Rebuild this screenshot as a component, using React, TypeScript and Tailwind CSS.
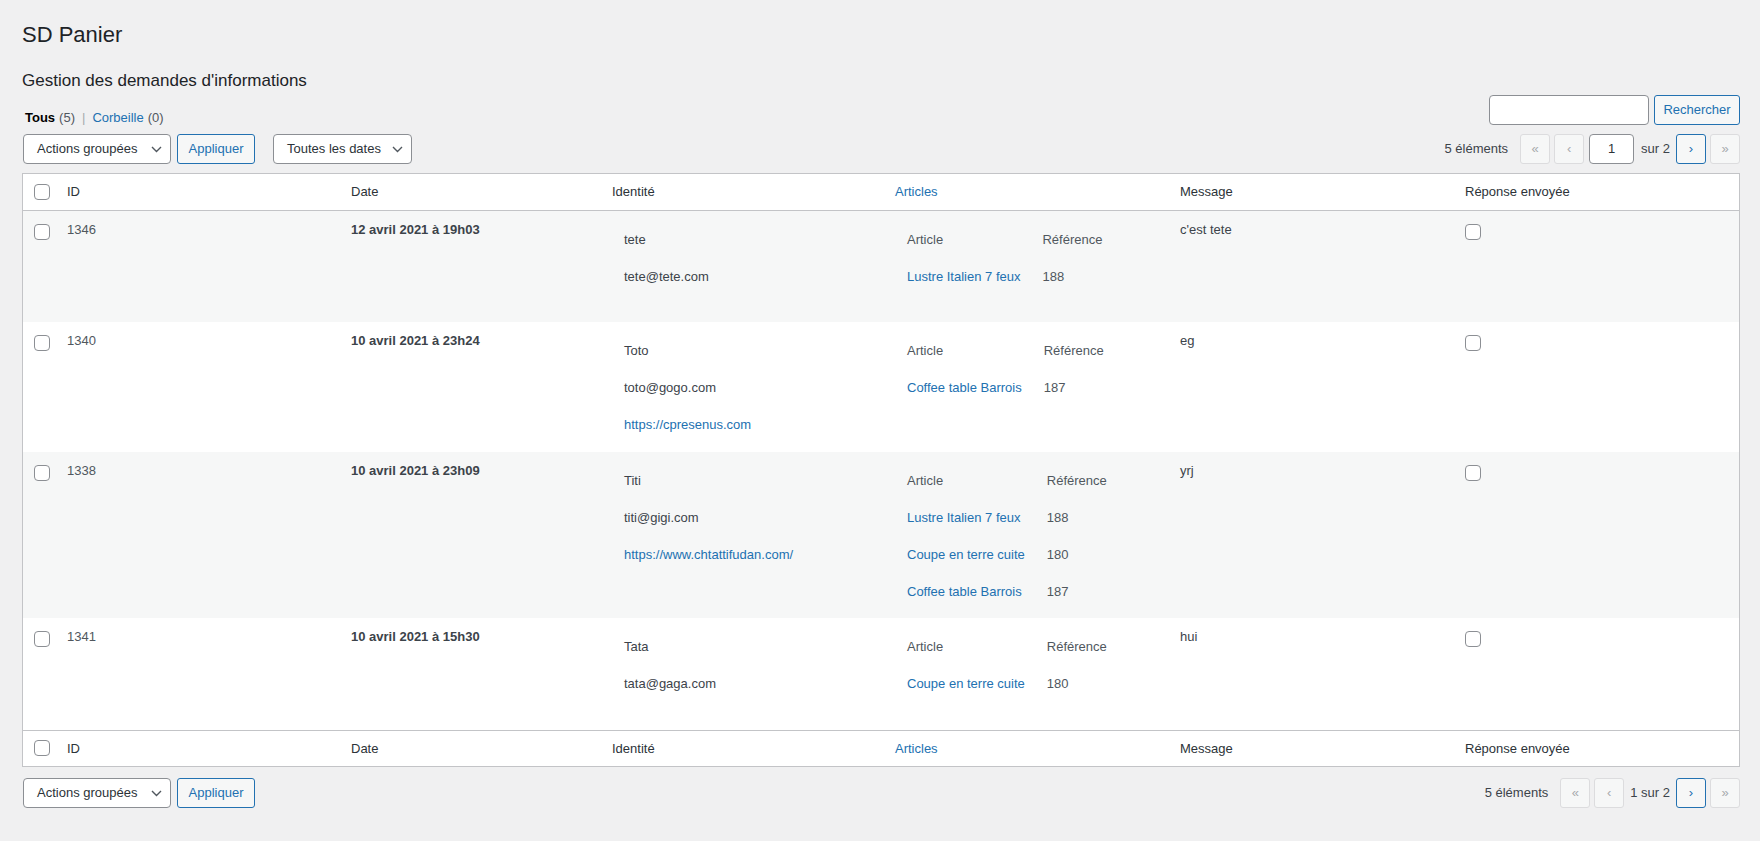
import React from "react";

type Row = {
  id: string;
  date: string;
  name: string;
  email: string;
  url: string;
  articles: [string, string][];
  msg: string;
  h: string;
  striped: boolean;
};

const rows: Row[] = [
  {
    id: "1346",
    date: "12 avril 2021 à 19h03",
    name: "tete",
    email: "tete@tete.com",
    url: "",
    articles: [["Lustre Italien 7 feux", "188"]],
    msg: "c'est tete",
    h: "h-[112px]",
    striped: true,
  },
  {
    id: "1340",
    date: "10 avril 2021 à 23h24",
    name: "Toto",
    email: "toto@gogo.com",
    url: "https://cpresenus.com",
    articles: [["Coffee table Barrois", "187"]],
    msg: "eg",
    h: "h-[130px]",
    striped: false,
  },
  {
    id: "1338",
    date: "10 avril 2021 à 23h09",
    name: "Titi",
    email: "titi@gigi.com",
    url: "https://www.chtattifudan.com/",
    articles: [
      ["Lustre Italien 7 feux", "188"],
      ["Coupe en terre cuite", "180"],
      ["Coffee table Barrois", "187"],
    ],
    msg: "yrj",
    h: "h-[166px]",
    striped: true,
  },
  {
    id: "1341",
    date: "10 avril 2021 à 15h30",
    name: "Tata",
    email: "tata@gaga.com",
    url: "",
    articles: [["Coupe en terre cuite", "180"]],
    msg: "hui",
    h: "h-[112px]",
    striped: false,
  },
];

function Checkbox() {
  return <span className="block w-4 h-4 rounded-[4px] border border-[#8c8f94] bg-white" />;
}

function Chevron() {
  return (
    <svg width="11" height="7" viewBox="0 0 11 7" className="shrink-0">
      <path d="M1 1l4.5 4.5L10 1" fill="none" stroke="#50575e" strokeWidth="1.4" />
    </svg>
  );
}

function Select({ label, w }: { label: string; w: string }) {
  return (
    <div
      className={`${w} h-[30px] flex items-center justify-between pl-[13px] pr-[8px] border border-[#8c8f94] rounded-[4px] bg-white text-[13px] text-[#2c3338]`}
    >
      <span>{label}</span>
      <Chevron />
    </div>
  );
}

function Apply() {
  return (
    <div className="w-[78px] h-[30px] flex items-center justify-center border border-[#2271b1] rounded-[3px] bg-[#f6f7f7] text-[13px] text-[#2271b1]">
      Appliquer
    </div>
  );
}

function PageBtn({ glyph, active }: { glyph: string; active?: boolean }) {
  return active ? (
    <div className="w-[30px] h-[30px] flex items-center justify-center border border-[#2271b1] rounded-[3px] bg-[#f6f7f7] text-[13px] text-[#2271b1]">
      {glyph}
    </div>
  ) : (
    <div className="w-[30px] h-[30px] flex items-center justify-center border border-[#dcdcde] rounded-[3px] bg-[#f6f7f7] text-[13px] text-[#a7aaad]">
      {glyph}
    </div>
  );
}

function HeaderCells() {
  return (
    <>
      <th className="p-0 pl-[11px] align-middle">
        <Checkbox />
      </th>
      <th className="px-[10px] text-left font-normal text-[#2c3338]">ID</th>
      <th className="px-[10px] text-left font-normal text-[#2c3338]">Date</th>
      <th className="px-[10px] text-left font-normal text-[#2c3338]">Identité</th>
      <th className="px-[10px] text-left font-normal text-[#2271b1]">Articles</th>
      <th className="px-[10px] text-left font-normal text-[#2c3338]">Message</th>
      <th className="px-[10px] text-left font-normal text-[#2c3338]">Réponse envoyée</th>
    </>
  );
}

export default function App() {
  return (
    <div className="min-h-screen bg-[#f0f0f1] font-['Liberation_Sans',Arial,sans-serif] text-[13px] leading-[19.5px] text-[#3c434a]">
      <div className="pl-[22px] pr-[20px] pt-[20px] pb-[30px]">
        <h1 className="text-[22px] leading-[30px] font-normal text-[#1d2327]">SD Panier</h1>
        <h2 className="mt-[20px] text-[17px] leading-[22px] font-normal text-[#1d2327]">
          Gestion des demandes d'informations
        </h2>

        <div className="mt-[3px] h-[30px] flex items-start justify-between">
          <div className="mt-[13px] ml-[3px] flex items-center text-[13px]">
            <span className="font-bold text-black">Tous</span>
            <span className="ml-[4px] text-[#50575e]">(5)</span>
            <span className="mx-[7px] text-[#a7aaad]">|</span>
            <span className="text-[#2271b1]">Corbeille</span>
            <span className="ml-[4px] text-[#50575e]">(0)</span>
          </div>
          <div className="flex items-center gap-[5px]">
            <div className="w-[160px] h-[30px] border border-[#8c8f94] rounded-[4px] bg-white" />
            <div className="w-[86px] h-[30px] flex items-center justify-center border border-[#2271b1] rounded-[3px] bg-[#f6f7f7] text-[13px] text-[#2271b1]">
              Rechercher
            </div>
          </div>
        </div>

        <div className="mt-[9px] h-[30px] flex items-center justify-between">
          <div className="ml-[1px] flex items-center">
            <Select label="Actions groupées" w="w-[148px]" />
            <div className="ml-[6px]">
              <Apply />
            </div>
            <div className="ml-[18px]">
              <Select label="Toutes les dates" w="w-[139px]" />
            </div>
          </div>
          <div className="flex items-center">
            <span className="mr-[12px] text-[#3c434a]">5 éléments</span>
            <PageBtn glyph="«" />
            <div className="ml-[4px]">
              <PageBtn glyph="‹" />
            </div>
            <div className="ml-[5px] w-[45px] h-[30px] flex items-center justify-center border border-[#8c8f94] rounded-[4px] bg-white text-[#2c3338]">
              1
            </div>
            <span className="ml-[7px] text-[#3c434a]">sur 2</span>
            <div className="ml-[6px]">
              <PageBtn glyph="›" active />
            </div>
            <div className="ml-[4px]">
              <PageBtn glyph="»" />
            </div>
          </div>
        </div>

        <div className="mt-[9px] border border-[#c3c4c7] bg-white">
          <table className="w-full table-fixed border-collapse">
            <colgroup>
              <col className="w-[34px]" />
              <col className="w-[284px]" />
              <col className="w-[261px]" />
              <col className="w-[283px]" />
              <col className="w-[285px]" />
              <col className="w-[285px]" />
              <col />
            </colgroup>
            <thead>
              <tr className="h-[36px] border-b border-[#c3c4c7]">
                <HeaderCells />
              </tr>
            </thead>
            <tbody>
              {rows.map((r) => (
                <tr key={r.id} className={`${r.h} ${r.striped ? "bg-[#f6f7f7]" : "bg-white"}`}>
                  <td className="align-top p-0 pt-[13px] pl-[11px]">
                    <Checkbox />
                  </td>
                  <td className="align-top px-[10px] pt-[9px] text-[#50575e]">{r.id}</td>
                  <td className="align-top px-[10px] pt-[9px] font-bold text-[#3c434a]">{r.date}</td>
                  <td className="align-top px-[10px] pt-[9px]">
                    <table className="border-separate border-spacing-[2px]">
                      <tbody>
                        <tr>
                          <td className="px-[10px] py-[8px] leading-[19px] text-[#3c434a]">{r.name}</td>
                        </tr>
                        <tr>
                          <td className="px-[10px] py-[8px] leading-[19px] text-[#3c434a]">{r.email}</td>
                        </tr>
                        {r.url ? (
                          <tr>
                            <td className="px-[10px] py-[8px] leading-[19px] text-[#2271b1]">{r.url}</td>
                          </tr>
                        ) : null}
                      </tbody>
                    </table>
                  </td>
                  <td className="align-top px-[10px] pt-[9px]">
                    <table className="border-separate border-spacing-[2px]">
                      <tbody>
                        <tr>
                          <td className="px-[10px] py-[8px] leading-[19px] text-[#50575e]">Article</td>
                          <td className="px-[10px] py-[8px] leading-[19px] text-[#50575e]">Référence</td>
                        </tr>
                        {r.articles.map(([a, ref], i) => (
                          <tr key={i}>
                            <td className="px-[10px] py-[8px] leading-[19px] text-[#2271b1] whitespace-nowrap">{a}</td>
                            <td className="px-[10px] py-[8px] leading-[19px] text-[#50575e]">{ref}</td>
                          </tr>
                        ))}
                      </tbody>
                    </table>
                  </td>
                  <td className="align-top px-[10px] pt-[9px] text-[#3c434a]">{r.msg}</td>
                  <td className="align-top px-[10px] pt-[13px]">
                    <Checkbox />
                  </td>
                </tr>
              ))}
            </tbody>
            <tfoot>
              <tr className="h-[36px] border-t border-[#c3c4c7]">
                <HeaderCells />
              </tr>
            </tfoot>
          </table>
        </div>

        <div className="mt-[11px] h-[30px] flex items-center justify-between">
          <div className="ml-[1px] flex items-center">
            <Select label="Actions groupées" w="w-[148px]" />
            <div className="ml-[6px]">
              <Apply />
            </div>
          </div>
          <div className="flex items-center">
            <span className="mr-[12px] text-[#3c434a]">5 éléments</span>
            <PageBtn glyph="«" />
            <div className="ml-[4px]">
              <PageBtn glyph="‹" />
            </div>
            <span className="ml-[6px] text-[#3c434a]">1 sur 2</span>
            <div className="ml-[6px]">
              <PageBtn glyph="›" active />
            </div>
            <div className="ml-[4px]">
              <PageBtn glyph="»" />
            </div>
          </div>
        </div>
      </div>
    </div>
  );
}
